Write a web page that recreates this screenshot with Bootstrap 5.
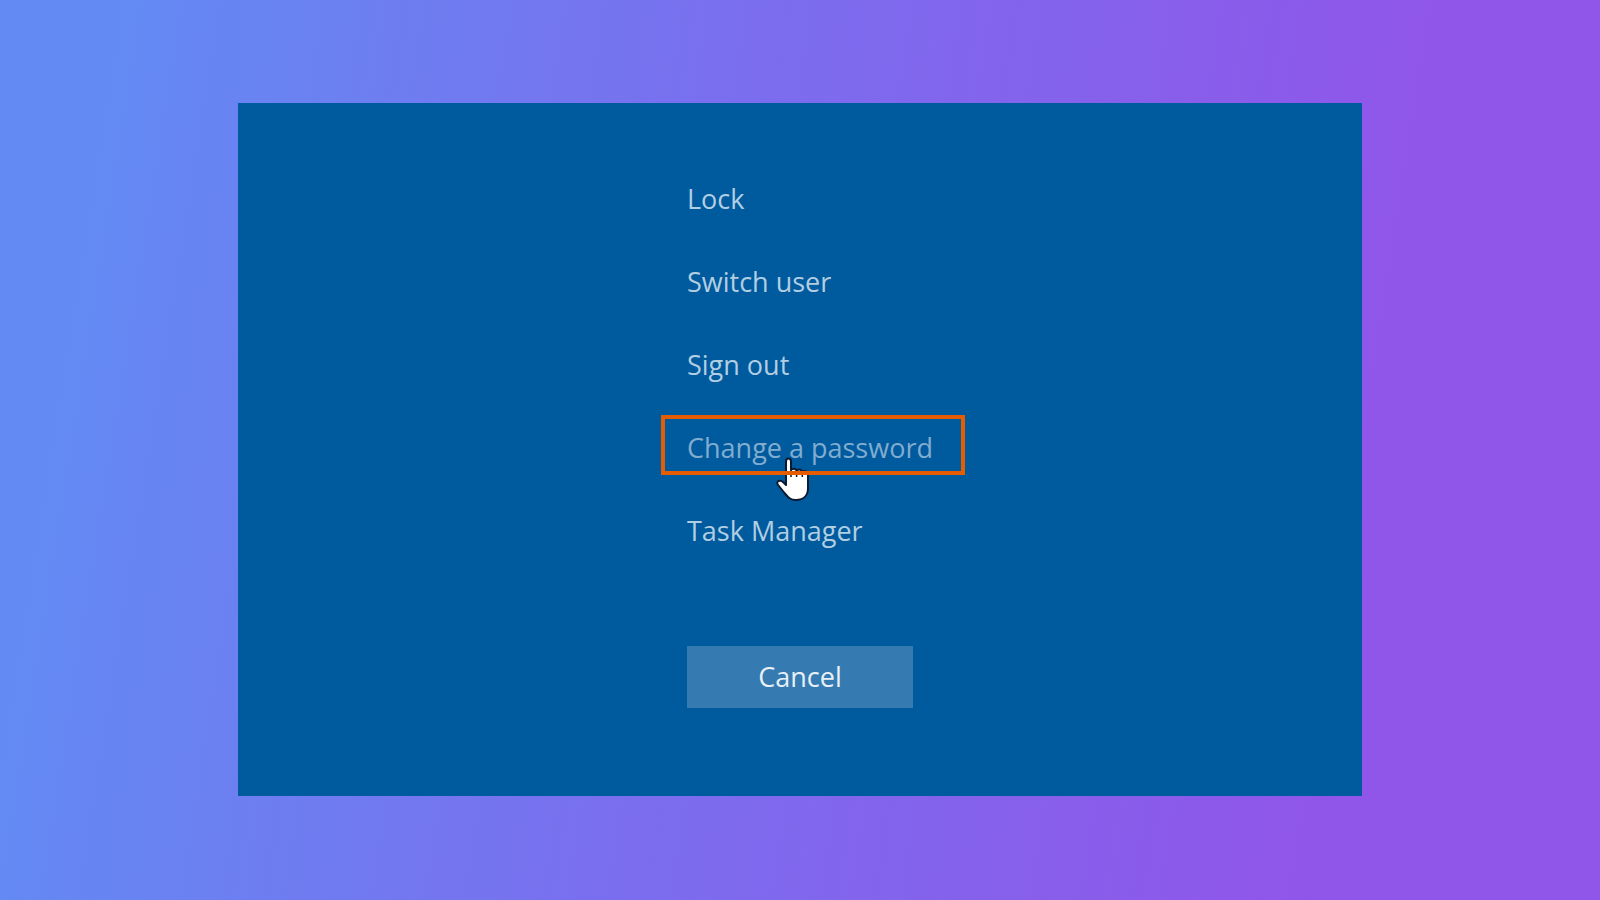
<!DOCTYPE html>
<html lang="en">
<head>
<meta charset="utf-8">
<meta name="viewport" content="width=device-width, initial-scale=1">
<title>Security options</title>
<link href="https://cdn.jsdelivr.net/npm/bootstrap@5.3.0/dist/css/bootstrap.min.css" rel="stylesheet">
<style>
  body {
    font-family: "Open Sans", "Noto Sans", sans-serif;
    background: linear-gradient(99deg, #638af3 7%, #7c6cee 46%, #9055e9 84%);
  }
  .backdrop { padding: 103px 238px 104px; }
  .security-panel { background: #005a9e; padding-top: 66px; }
  .option-column { width: 226px; }
  .option-list { gap: 23px; }
  .option-btn, .cancel-btn {
    font-size: 27px;
    line-height: 60px;
    border: 0;
    border-radius: 0;
    padding: 0;
  }
  .option-btn { color: #b2cee2; background: none; }
  .option-btn:hover, .option-btn:focus { color: #fff; }
  .option-btn.hovered { color: #80adcf; }
  .cancel-btn { margin-top: 85px; line-height: 62px; color: #e8f0f7; background: #357bb2; }
  .cancel-btn:hover { color: #fff; background: #4d8bbb; }
  .highlight-frame {
    top: -3px;
    left: -26px;
    width: 304px;
    height: 60px;
    border: 4px solid #e65c00;
    pointer-events: none;
  }
  .hand-pointer { top: 37px; left: 87px; pointer-events: none; }
</style>
</head>
<body>
<main class="backdrop d-flex min-vh-100">
  <section class="security-panel flex-fill d-flex justify-content-center" aria-label="Security options">
    <div class="option-column d-flex flex-column">
      <ul class="option-list list-unstyled d-flex flex-column mb-0">
        <li><button type="button" class="option-btn btn d-block text-nowrap">Lock</button></li>
        <li><button type="button" class="option-btn btn d-block text-nowrap">Switch user</button></li>
        <li><button type="button" class="option-btn btn d-block text-nowrap">Sign out</button></li>
        <li class="position-relative">
          <button type="button" class="option-btn hovered btn d-block text-nowrap">Change a password</button>
          <svg class="hand-pointer position-absolute" width="38" height="50" viewBox="0 0 38 50" aria-hidden="true">
            <path d="M12 6.500Q12 3.500 14.500 3.500T17 6.500V15Q18.500 13 21 14Q22.500 14.500 22.600 16Q24.500 13.800 27 15Q28.200 15.700 28.300 17Q30 15.300 32 16.300Q34 17.300 34 20V33C34 40 30 45 22 45C15.500 45 13.500 41.500 10.500 38L4.500 30.500Q2 27.500 4.500 26Q7 25 9.500 27.500L12 30Z" fill="#fff" stroke="#0c1a30" stroke-width="2" stroke-linejoin="round"/>
            <path d="M17 14V22M22.600 15V22M28.300 16.500V22" fill="none" stroke="#0c1a30" stroke-width="1.500"/>
          </svg>
          <span class="highlight-frame position-absolute"></span>
        </li>
        <li><button type="button" class="option-btn btn d-block text-nowrap">Task Manager</button></li>
      </ul>
      <button type="button" class="cancel-btn btn w-100">Cancel</button>
    </div>
  </section>
</main>
<script src="https://cdn.jsdelivr.net/npm/bootstrap@5.3.0/dist/js/bootstrap.bundle.min.js"></script>
</body>
</html>
